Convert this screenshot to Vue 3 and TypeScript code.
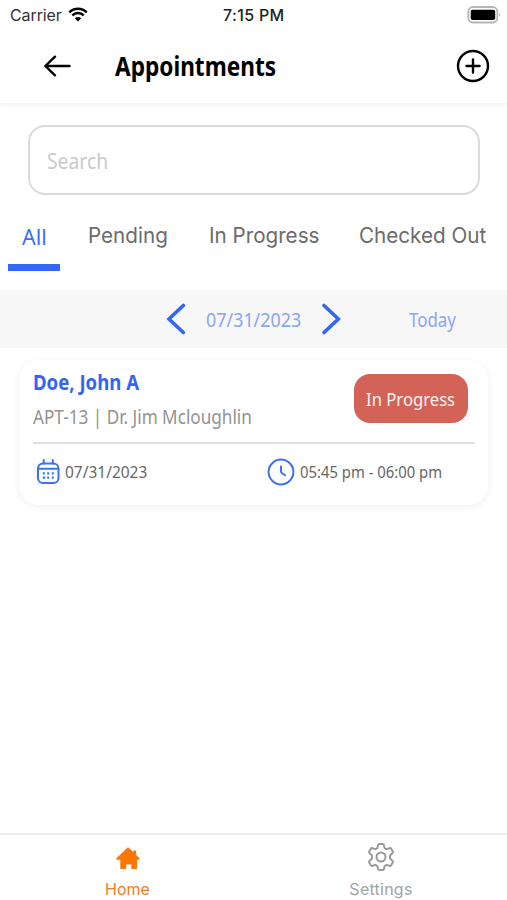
<script setup lang="ts">
import { ref } from 'vue'

interface Tab {
  label: string
  key: string
}

const tabs: Tab[] = [
  { label: 'All', key: 'all' },
  { label: 'Pending', key: 'pending' },
  { label: 'In Progress', key: 'progress' },
  { label: 'Checked Out', key: 'checked' },
]
const active = ref<string>('all')
const query = ref<string>('')
const date = '07/31/2023'
</script>

<template>
  <div class="screen">
    <div class="status">
      <span class="carrier">Carrier</span>
      <svg class="wifi" width="20" height="15" viewBox="0 0 20 15">
        <path d="M1.3 5.3a12.4 12.4 0 0 1 17.4 0" />
        <path d="M4.3 8.4a8.1 8.1 0 0 1 11.4 0" />
        <path class="dot" d="M6.8 11.3a4.6 4.6 0 0 1 6.4 0L10 14.5z" />
      </svg>
      <span class="clock">7:15 PM</span>
      <svg class="battery" width="34" height="18" viewBox="0 0 34 18">
        <rect x="1.300" y="1" width="29" height="15.500" rx="4.500" fill="#fff" stroke="#b5b5b5" stroke-width="1.800" />
        <rect x="3.700" y="3.700" width="24.500" height="10.300" rx="2" fill="#000" />
        <path d="M32 6.800q2 2 0 4z" fill="#b5b5b5" />
      </svg>
    </div>

    <header class="header">
      <svg class="back" width="28" height="24" viewBox="0 0 28 24">
        <path d="M26.500 12H2.500M12 2.700 2.300 12l9.700 9.300" />
      </svg>
      <h1 class="title"><span class="pt">Appointments</span></h1>
      <svg class="add" width="34" height="34" viewBox="0 0 34 34">
        <circle cx="17" cy="17" r="15" />
        <path d="M17 10.500v13M10.500 17h13" />
      </svg>
    </header>

    <label class="search">
      <input v-model="query" class="field pt" placeholder="Search" />
    </label>

    <nav class="tabs">
      <button
        v-for="tab in tabs"
        :key="tab.key"
        class="tab"
        :class="[tab.key, { active: active === tab.key }]"
        @click="active = tab.key"
      >
        <span class="label">{{ tab.label }}</span>
      </button>
    </nav>

    <section class="datebar">
      <svg class="chev" width="20" height="32" viewBox="0 0 20 32"><path d="M17.300 2.500 3 16l14.300 13.500" /></svg>
      <div class="day"><span class="pt">{{ date }}</span></div>
      <svg class="chev" width="20" height="32" viewBox="0 0 20 32"><path d="M3 2.500 17.300 16 3 29.500" /></svg>
      <div class="today"><span class="pt">Today</span></div>
    </section>

    <article class="card">
      <div class="top">
        <div class="who">
          <div class="name"><span class="pt">Doe, John A</span></div>
          <div class="desc"><span class="pt">APT-13 | Dr. Jim Mcloughlin</span></div>
        </div>
        <div class="badge"><span class="pt">In Progress</span></div>
      </div>
      <div class="meta">
        <svg class="cal" width="24" height="26" viewBox="0 0 24 26">
          <rect x="2" y="4.500" width="20.500" height="19.500" rx="5" />
          <path d="M2.500 9.800h19.500M7.700 1v3.500M16.800 1v3.500" />
          <path class="dots" d="M6.800 14.300h2M11.200 14.300h2M15.800 14.300h2M6.800 18.600h2.500M11.200 18.600h2M15.800 18.600h2" />
        </svg>
        <div class="mdate"><span class="pt">{{ date }}</span></div>
        <svg class="time" width="28" height="28" viewBox="0 0 28 28">
          <circle cx="14" cy="14" r="12.400" />
          <path d="M14 8.500v5q0 1 .8 1.500l3.200 2.300" />
        </svg>
        <div class="mtime"><span class="pt">05:45 pm - 06:00 pm</span></div>
      </div>
    </article>

    <footer class="bottom">
      <div class="item home">
        <svg width="26" height="26" viewBox="0 0 26 26">
          <path d="M12.300 1.800q.7-.6 1.400 0l4.600 4.300V5q0-.5.500-.5h1.900q.5 0 .5.500v4l3.300 3.200q1 1.300-.5 1.500h-2v8.500q0 .8-.8.800h-4.900v-4.500h-5.100v4.500H6.100q-.8 0-.8-.8v-8.500h-3.300q-1.500-.2-.5-1.500z" />
        </svg>
        <span>Home</span>
      </div>
      <div class="item settings">
        <svg width="28" height="28" viewBox="0 0 28 28">
          <path d="M11 2.200Q11.200 1 12.300 1h3.400q1.100 0 1.300 1.200l.4 2.100q.2.900 1.100 1.300 1 .6 1.900.3l2-.7q1.200-.4 1.700.5l1.700 2.900q.5 1-.4 1.700l-1.700 1.400q-.7.600-.7 1.600v1.400q0 1 .7 1.600l1.700 1.400q.9.700.4 1.700l-1.700 2.900q-.5.900-1.700.5l-2-.7q-.9-.3-1.900.3-.9.500-1.100 1.300l-.4 2.100Q16.800 27 15.700 27h-3.400Q11.200 27 11 25.800l-.4-2.100q-.2-.8-1.100-1.300-1-.6-1.900-.3l-2 .7q-1.200.4-1.700-.5l-1.700-2.900q-.5-1 .4-1.700l1.700-1.400q.7-.6.700-1.600v-1.400q0-1-.7-1.600L2.600 10.300q-.9-.7-.4-1.700l1.700-2.900q.5-.9 1.700-.5l2 .7q.9.300 1.900-.3.900-.4 1.100-1.300z" />
          <circle cx="14" cy="14" r="4.500" />
        </svg>
        <span>Settings</span>
      </div>
    </footer>
  </div>
</template>

<style>
body {
  background: #fff;
}
</style>

<style scoped>
* {
  box-sizing: border-box;
}
.screen {
  width: 507px;
  height: 900px;
  display: flex;
  flex-direction: column;
  overflow: hidden;
  background: #fff;
  font-family: Inter, "Liberation Sans", sans-serif;
  color: #000;
}
svg {
  display: block;
  flex: none;
}
.pt {
  display: inline-block;
  font-family: "Noto Sans", sans-serif;
  white-space: nowrap;
  transform-origin: left center;
}
.status {
  display: grid;
  grid-template-columns: 58px 155px 254px 34px;
  height: 27px;
  padding: 3px 0 0 10px;
  align-items: center;
  line-height: 24px;
}
.carrier {
  font-size: 16px;
  letter-spacing: -0.1px;
  color: #333;
}
.wifi {
  margin-bottom: 2px;
}
.wifi path {
  fill: none;
  stroke: #000;
  stroke-width: 2.500;
}
.wifi .dot {
  fill: #000;
  stroke: none;
}
.clock {
  font-size: 16px;
  font-weight: 500;
  letter-spacing: 0.35px;
  color: #222;
}
.battery {
  margin: 0 0 1px -10px;
}
.header {
  height: 76px;
  display: flex;
  align-items: center;
  padding: 1px 17px 0 43px;
  box-shadow: 0 2px 5px rgba(0, 0, 0, 0.06);
}
.back path,
.add * {
  fill: none;
  stroke: #000;
  stroke-width: 2.400;
  stroke-linecap: round;
  stroke-linejoin: round;
}
.title {
  margin: 0 0 0 44px;
  width: 341px;
  padding-top: 1px;
  font-size: 26px;
  line-height: 36px;
  font-weight: 700;
}
.title .pt {
  transform: scaleX(0.87);
}
.search {
  flex: none;
  height: 70px;
  margin: 22px 27px 0 28px;
  border: 2px solid #dbdbdc;
  border-radius: 17px;
  padding: 2px 17px 0;
  display: flex;
  align-items: center;
}
.field {
  border: 0;
  outline: 0;
  padding: 0;
  width: 400px;
  height: 36px;
  background: none;
  font-size: 21px;
  transform: scaleX(0.92);
}
.field::placeholder {
  color: #c9cacd;
  opacity: 1;
}
.tabs {
  flex: none;
  display: grid;
  grid-template-columns: 52px 108px 137px 1fr;
  gap: 0;
  height: 76px;
  padding: 0 0 0 8px;
  margin-bottom: 19px;
}
.tab {
  display: flex;
  align-items: flex-start;
  border: 0;
  background: none;
  padding: 22px 0 0;
  height: 76px;
  font: 400 21.500px/36px Inter, sans-serif;
  color: #6b6b6b;
  text-align: left;
  white-space: nowrap;
}
.pending {
  padding-left: 28px;
}
.progress {
  padding-left: 41px;
}
.checked {
  padding-left: 54px;
}
.label {
  display: block;
  transform-origin: left center;
  transform: scaleX(0.96);
}
.tab.active {
  padding: 24px 0 0 14px;
  border-bottom: 7px solid #3366fb;
  color: #3d6df8;
  font-family: "Noto Sans", sans-serif;
}
.tab.active .label {
  transform: scaleX(1);
}
.datebar {
  flex: none;
  height: 58px;
  background: #f7f7f7;
  display: grid;
  grid-template-columns: 20px 135px 20px 1fr;
  align-items: center;
  padding-left: 166px;
  font-size: 20px;
  line-height: 30px;
  color: #8aa5f4;
}
.chev path {
  fill: none;
  stroke: #3366f5;
  stroke-width: 3.600;
  stroke-linecap: round;
}
.day {
  padding: 1px 0 0 20px;
}
.today {
  padding: 1px 0 0 68px;
}
.day .pt {
  transform: scaleX(0.895);
}
.today .pt {
  transform: scaleX(0.845);
}
.card {
  flex: none;
  margin: 12px 19px 0;
  height: 145px;
  border-radius: 20px;
  padding: 0 13px 0 14px;
  box-shadow: 0 2px 8px rgba(0, 0, 0, 0.06);
}
.top {
  display: flex;
  justify-content: space-between;
  height: 84px;
  border-bottom: 2px solid #dedede;
}
.who {
  width: 300px;
  padding-top: 6px;
}
.name {
  height: 33px;
  font-size: 21px;
  line-height: 32px;
  font-weight: 700;
  color: #3366ee;
}
.name .pt {
  transform: scaleX(0.885);
}
.desc {
  height: 36px;
  font-size: 19px;
  line-height: 36px;
  color: #929292;
}
.desc .pt {
  transform: scaleX(0.902);
}
.badge {
  width: 114px;
  height: 49px;
  margin: 14px 7px 0 0;
  border-radius: 16px;
  background: #d36356;
  color: #fff2f0;
  font-size: 18.500px;
  line-height: 50px;
  padding-left: 12px;
}
.badge .pt {
  transform: scaleX(0.9);
}
.meta {
  display: grid;
  grid-template-columns: 32px 202px 33px 1fr;
  align-items: center;
  height: 56px;
  font-size: 17px;
  line-height: 28px;
  color: #676767;
}
.cal,
.time {
  fill: none;
  stroke: #3d70f6;
  stroke-width: 2;
  stroke-linecap: round;
}
.cal {
  margin-left: 3px;
}
.cal .dots {
  stroke-width: 2.200;
  stroke-linecap: butt;
}
.mdate .pt {
  transform: scaleX(0.91);
}
.mtime .pt {
  transform: scaleX(0.873);
}
.bottom {
  margin-top: auto;
  flex: none;
  height: 67px;
  border-top: 2px solid #ececec;
  display: grid;
  grid-template-columns: 255px 252px;
}
.item {
  display: flex;
  flex-direction: column;
  align-items: center;
  font-size: 16px;
  line-height: 22px;
}
.home {
  padding-top: 11px;
  gap: 6px;
  color: #f47a1c;
}
.home svg {
  fill: #fb7605;
  margin-left: 1px;
}
.settings {
  padding-top: 8px;
  gap: 7px;
  color: #a3a3a3;
  letter-spacing: 0.25px;
}
.settings svg {
  fill: none;
  stroke: #999;
  stroke-width: 2;
}
</style>
